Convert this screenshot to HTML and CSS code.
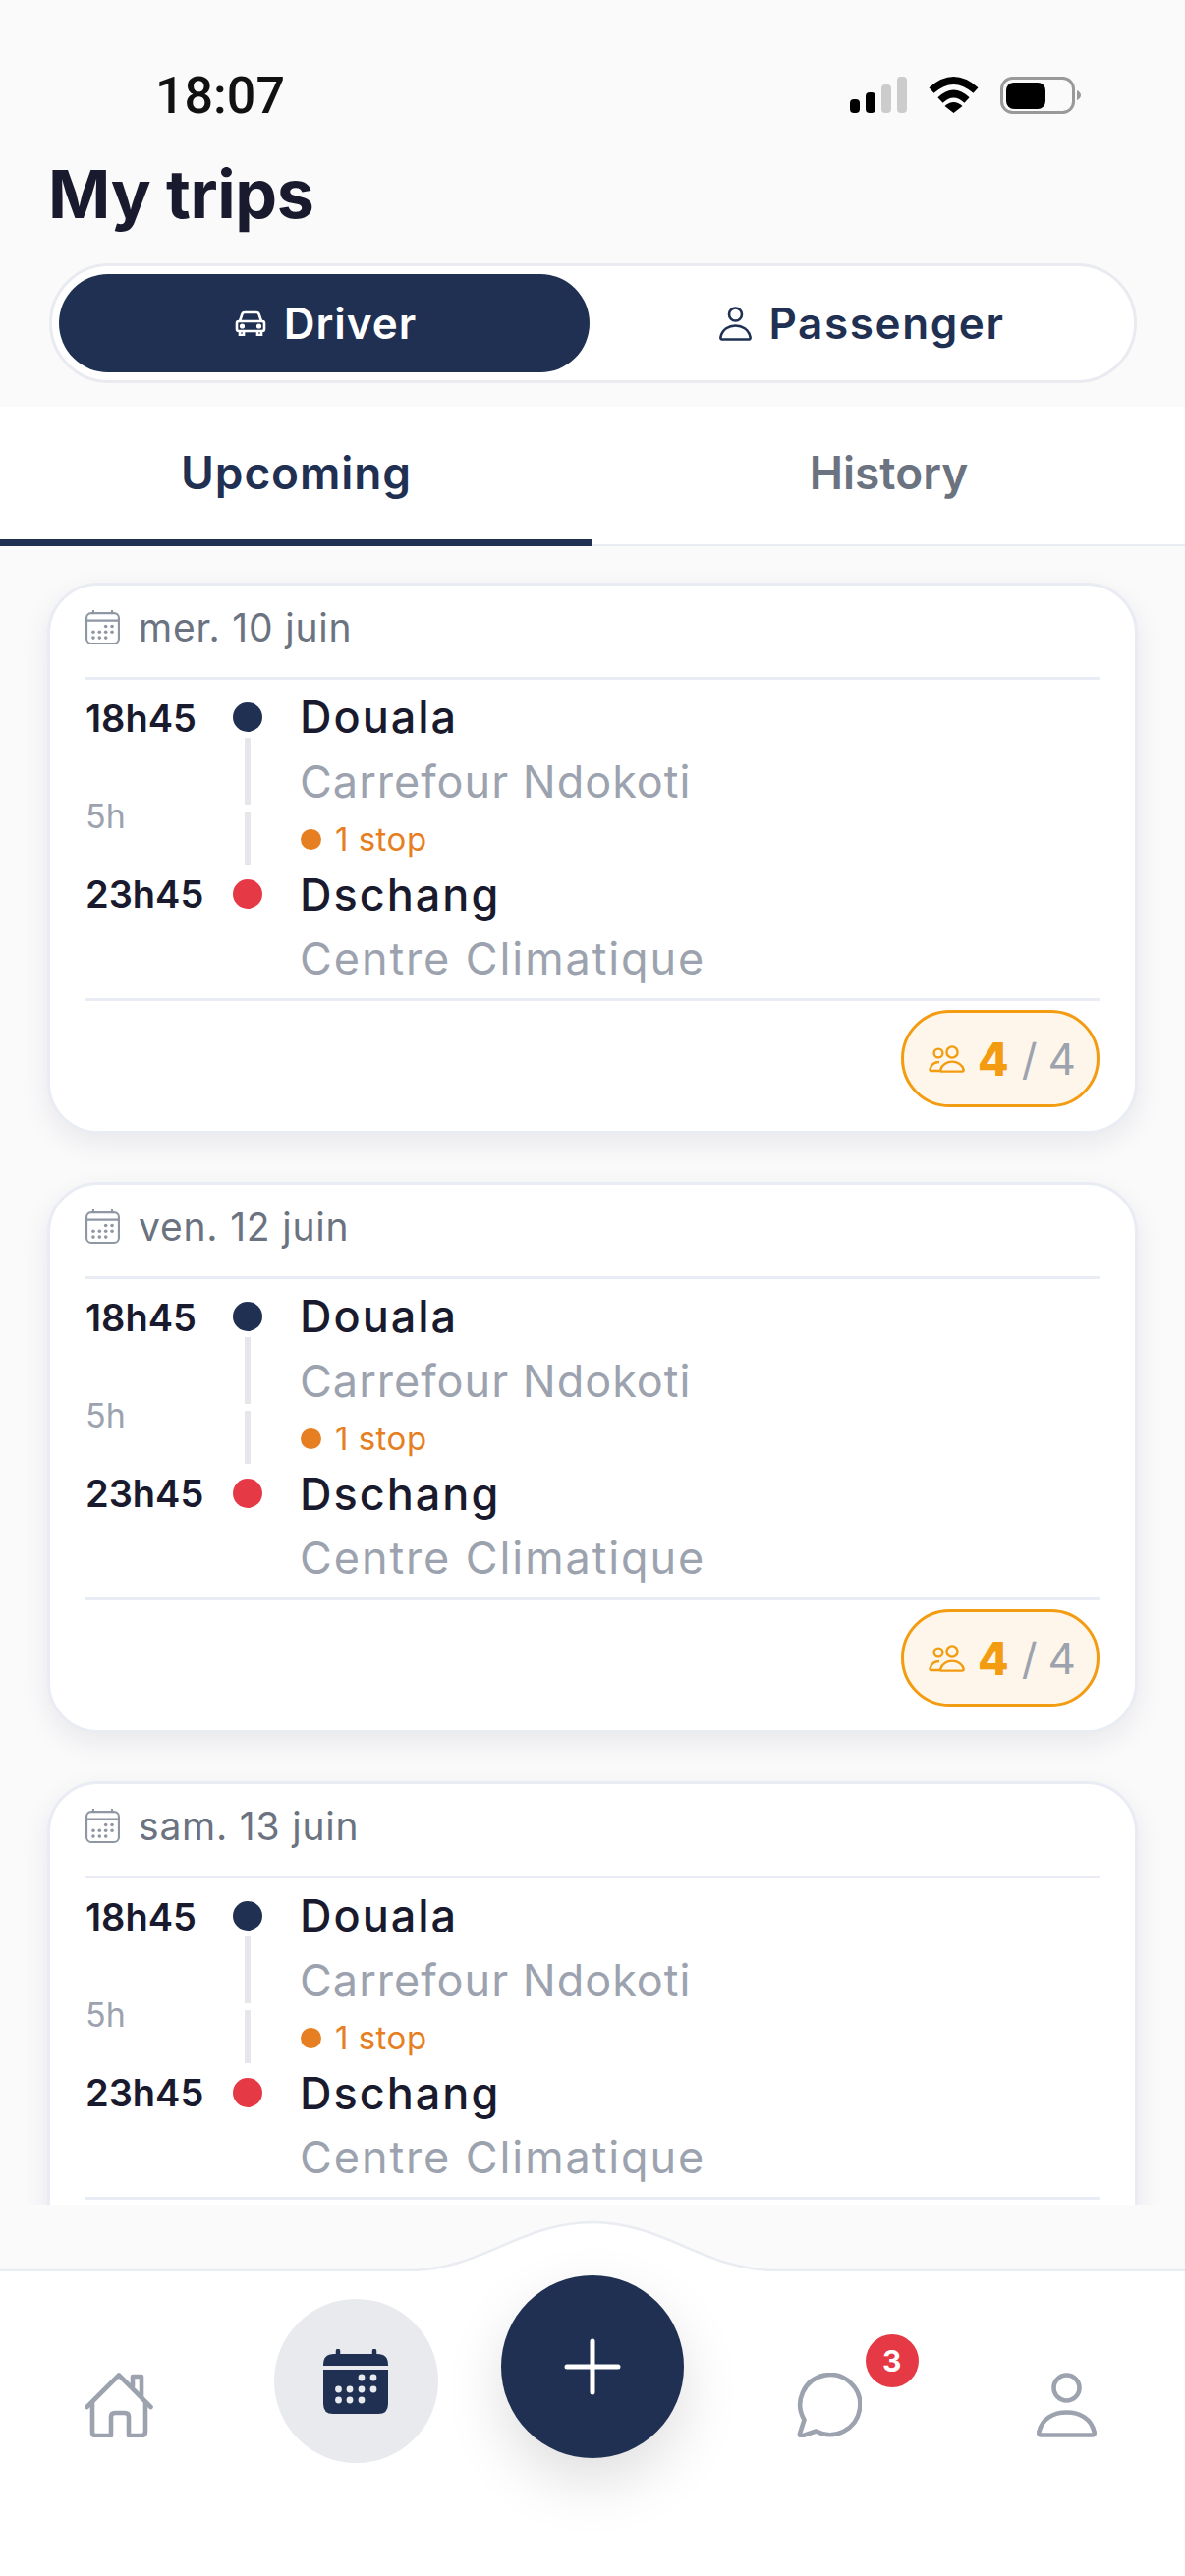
FILE: index.html
```html
<!DOCTYPE html>
<html>
   <head>
      <title>My trips</title>
      <link rel="stylesheet" href="styles.css">
   </head>
   <body>

   <svg class="defs" width="0" height="0">
      <symbol id="cal" viewBox="0 0 66 66">
         <path d="M15 6V1M51 6V1" fill="none" stroke="currentColor" stroke-width="4" stroke-linecap="round"/>
         <rect x="2" y="6" width="62" height="58" rx="9" fill="none" stroke="currentColor" stroke-width="4"/>
         <path d="M2 20H64" stroke="currentColor" stroke-width="4"/>
         <g fill="currentColor">
            <circle cx="39" cy="31" r="3.4"/><circle cx="51" cy="31" r="3.4"/>
            <circle cx="15" cy="42" r="3.4"/><circle cx="27" cy="42" r="3.4"/><circle cx="39" cy="42" r="3.4"/><circle cx="51" cy="42" r="3.4"/>
            <circle cx="15" cy="53" r="3.4"/><circle cx="27" cy="53" r="3.4"/><circle cx="39" cy="53" r="3.4"/>
         </g>
      </symbol>
      <symbol id="people" viewBox="0 0 37 28">
         <g fill="none" stroke="currentColor" stroke-width="2.4">
            <circle cx="10" cy="8" r="4.4"/>
            <circle cx="24" cy="7" r="5.6"/>
            <path d="M12 26H3Q1 26 1.6 24C3 19 7 17 11 17"/>
            <path d="M13 26.6H34Q36 26.6 35.6 24.6C34.4 19.6 29 16.6 24 16.6S13.6 19.6 12.4 24.6Q12 26.6 13 26.6Z"/>
         </g>
      </symbol>
   </svg>

   <div class="status">
      <span class="clock">18:07</span>
      <div class="status-icons">
         <svg width="58" height="37" viewBox="0 0 58 37">
            <rect x="0" y="23" width="10" height="14" rx="4"/>
            <rect x="16" y="16" width="10" height="21" rx="4"/>
            <rect x="32" y="8" width="10" height="29" rx="4" fill="#cccccc"/>
            <rect x="48" y="0" width="10" height="37" rx="4" fill="#cccccc"/>
         </svg>
         <svg width="51" height="37" viewBox="0 0 51 37">
            <path d="M3 14Q25.5 -6 48 14" fill="none" stroke="#000" stroke-width="7.5"/>
            <path d="M12 24Q25.5 11 39 24" fill="none" stroke="#000" stroke-width="7.5"/>
            <path d="M16.5 30Q25.5 22 34.500 30L25.5 37Z"/>
         </svg>
         <svg width="82" height="38" viewBox="0 0 82 38">
            <rect x="1.500" y="1.500" width="73" height="35" rx="11" fill="none" stroke="#999" stroke-width="3"/>
            <rect x="6" y="6" width="40" height="27" rx="8"/>
            <path d="M78 14Q82 16 82 19T78 24Z" fill="#999"/>
         </svg>
      </div>
   </div>

   <h1 class="title">My trips</h1>

   <div class="segment">
      <div class="seg-btn seg-on">
         <svg width="32" height="26" viewBox="0 0 32 26" fill="none" stroke="#fff" stroke-width="2.600">
            <path d="M5 11L7.500 3.500Q8 2 10 2H22Q24 2 24.500 3.500L27 11"/>
            <rect x="2" y="11" width="28" height="10" rx="2"/>
            <path d="M5 21V25H9V21M23 21V25H27V21"/>
            <circle cx="7.500" cy="16" r="1.300"/><circle cx="24.500" cy="16" r="1.300"/>
         </svg>
         Driver
      </div>
      <div class="seg-btn seg-pass">
         <svg width="33" height="35" viewBox="0 0 33 35" fill="none" stroke="#1f3052" stroke-width="2.600">
            <circle cx="16.500" cy="8" r="6.500"/>
            <path d="M3 33.500H30Q32 33.500 31.500 31C30 23 23 19.500 16.500 19.500S3 23 1.500 31Q1 33.500 3 33.500Z"/>
         </svg>
         Passenger
      </div>
   </div>

   <div class="tabs">
      <div class="tab tab-on">Upcoming</div>
      <div class="tab">History</div>
   </div>

   <div class="list">
      <div class="card">
         <div class="card-date"><svg class="cal-ic"><use href="#cal"/></svg>mer. 10 juin</div>
         <div class="trip">
            <div class="time">18h45</div>
            <div class="mark"><i class="dot dot-navy"></i></div>
            <div class="city">Douala</div>
            <div class="dur">5h</div>
            <div class="mark mark-top"><i class="line line-a"></i></div>
            <div class="place place-a">Carrefour Ndokoti</div>
            <div class="mark mark-top"><i class="line line-b"></i></div>
            <div class="stop"><i class="stop-dot"></i>1 stop</div>
            <div class="time arr">23h45</div>
            <div class="mark arr"><i class="dot dot-red"></i></div>
            <div class="city arr">Dschang</div>
            <div class="place place-b">Centre Climatique</div>
         </div>
         <div class="card-foot">
            <div class="seats"><svg class="people-ic"><use href="#people"/></svg><b>4</b><span class="slash">/</span><span>4</span></div>
         </div>
      </div>

      <div class="card">
         <div class="card-date"><svg class="cal-ic"><use href="#cal"/></svg>ven. 12 juin</div>
         <div class="trip">
            <div class="time">18h45</div>
            <div class="mark"><i class="dot dot-navy"></i></div>
            <div class="city">Douala</div>
            <div class="dur">5h</div>
            <div class="mark mark-top"><i class="line line-a"></i></div>
            <div class="place place-a">Carrefour Ndokoti</div>
            <div class="mark mark-top"><i class="line line-b"></i></div>
            <div class="stop"><i class="stop-dot"></i>1 stop</div>
            <div class="time arr">23h45</div>
            <div class="mark arr"><i class="dot dot-red"></i></div>
            <div class="city arr">Dschang</div>
            <div class="place place-b">Centre Climatique</div>
         </div>
         <div class="card-foot">
            <div class="seats"><svg class="people-ic"><use href="#people"/></svg><b>4</b><span class="slash">/</span><span>4</span></div>
         </div>
      </div>

      <div class="card">
         <div class="card-date"><svg class="cal-ic"><use href="#cal"/></svg>sam. 13 juin</div>
         <div class="trip">
            <div class="time">18h45</div>
            <div class="mark"><i class="dot dot-navy"></i></div>
            <div class="city">Douala</div>
            <div class="dur">5h</div>
            <div class="mark mark-top"><i class="line line-a"></i></div>
            <div class="place place-a">Carrefour Ndokoti</div>
            <div class="mark mark-top"><i class="line line-b"></i></div>
            <div class="stop"><i class="stop-dot"></i>1 stop</div>
            <div class="time arr">23h45</div>
            <div class="mark arr"><i class="dot dot-red"></i></div>
            <div class="city arr">Dschang</div>
            <div class="place place-b">Centre Climatique</div>
         </div>
      </div>
   </div>

   <div class="nav">
      <svg class="nav-curve" width="1206" height="68" viewBox="0 0 1206 68">
         <path d="M0 67H415C490 67 530 18 603 18S716 67 791 67H1206V68H0Z" fill="#fff"/>
         <path d="M0 67H415C490 67 530 18 603 18S716 67 791 67H1206" fill="none" stroke="#e9ecf1" stroke-width="2.500"/>
      </svg>
      <div class="nav-row">
         <div class="nav-item">
            <svg width="70" height="66" viewBox="0 0 70 66" fill="none" stroke="#9ca3af" stroke-width="4.600" stroke-linecap="round" stroke-linejoin="round">
               <path d="M2.500 35L35 2.500L67.500 35"/>
               <path d="M49 14V4H58V25"/>
               <path d="M8 30V60Q8 64 11 64H27V45Q27 41 31 41H41Q45 41 45 45V64H58Q62 64 62 60V30"/>
            </svg>
         </div>
         <div class="nav-item">
            <div class="nav-cal">
               <svg width="66" height="66" viewBox="0 0 66 66">
                  <path d="M15 7V2M52 7V2" stroke="#1f3052" stroke-width="4.500" stroke-linecap="round"/>
                  <path d="M0 16Q0 5 11 5H55Q66 5 66 16V17H0Z" fill="#1f3052"/>
                  <path d="M0 21H66V56Q66 66 56 66H10Q0 66 0 56Z" fill="#1f3052"/>
                  <g fill="#e9eaee">
                     <circle cx="39" cy="29" r="3.400"/><circle cx="51" cy="29" r="3.400"/>
                     <circle cx="15.500" cy="41" r="3.400"/><circle cx="27" cy="41" r="3.400"/><circle cx="39" cy="41" r="3.400"/><circle cx="51" cy="41" r="3.400"/>
                     <circle cx="15.500" cy="52" r="3.400"/><circle cx="27" cy="52" r="3.400"/><circle cx="39" cy="52" r="3.400"/>
                  </g>
               </svg>
            </div>
         </div>
         <div class="nav-item"></div>
         <div class="nav-item">
            <div class="chat">
               <svg width="67" height="66" viewBox="0 0 67 66" fill="none" stroke="#9ca3af" stroke-width="4.600" stroke-linejoin="round">
                  <path d="M8.500 48A30.500 30.500 0 1 1 20.500 59.500L6 64.500Q3.500 64.500 4 62Z"/>
               </svg>
               <span class="chat-badge">3</span>
            </div>
         </div>
         <div class="nav-item">
            <svg width="61" height="66" viewBox="0 0 61 66" fill="none" stroke="#9ca3af" stroke-width="4.600">
               <circle cx="30.500" cy="15.500" r="13"/>
               <path d="M5 63.500H56Q59.500 63.500 58.500 60C55.500 47 44 40.500 30.500 40.500S5.500 47 2.500 60Q1.500 63.500 5 63.500Z"/>
            </svg>
         </div>
      </div>
      <div class="fab">
         <svg width="58" height="58" viewBox="0 0 58 58" stroke="#fff" stroke-width="5" stroke-linecap="round">
            <path d="M29 3V55M3 29H55"/>
         </svg>
      </div>
   </div>
   </body>
</html>
```

FILE: styles.css
```css
* { box-sizing: border-box; }
html, body { margin: 0; padding: 0; }
body { width: 1206px; height: 2622px; overflow: hidden; background: #fafafb;
       font-family: "Inter", "Noto Sans", sans-serif; color: #1a1a2e;
       display: flex; flex-direction: column; }
.defs { position: absolute; }

/* status bar + title */
.status { height: 160px; flex: none; display: flex; justify-content: space-between;
          align-items: flex-start; padding: 70px 106px 0 158px; }
.clock { font-size: 52px; line-height: 56px; font-weight: 500; color: #111; font-family: "Roboto", sans-serif; }
.status-icons { display: flex; align-items: flex-start; gap: 22px; padding-top: 8px; }
.title { margin: 0; flex: none; height: 108px; padding-left: 49px; font-size: 68px;
         line-height: 74px; font-weight: 700; letter-spacing: -0.4px; }

/* driver / passenger switch */
.segment { flex: none; margin: 0 49px 24px 50px; height: 122px; background: #fff;
           border: 3px solid #e9ebf0; border-radius: 61px; padding: 8px 8px 8px 7px;
           display: grid; grid-template-columns: 540px 1fr; }
.seg-btn { height: 100px; border-radius: 50px; display: flex; align-items: center;
           justify-content: center; gap: 18px; font-size: 44px; font-weight: 600;
           letter-spacing: 1px; color: #1f3052; padding-left: 3px; }
.seg-pass { letter-spacing: 1.6px; padding-left: 8px; }
.seg-on { background: #1f3052; color: #fff; }

/* tabs */
.tabs { flex: none; height: 142px; background: #fff; display: grid;
        grid-template-columns: 603px 603px; border-bottom: 2px solid #e9ecf1; }
.tab { display: flex; justify-content: center; align-items: center; padding-bottom: 8px;
       font-size: 46px; font-weight: 600; color: #6b7280; height: 142px; }
.tab-on { color: #1f3052; border-bottom: 7px solid #1f3052; padding-bottom: 1px; letter-spacing: 0.9px; }

/* trip cards */
.list { flex: 1; min-height: 0; overflow: hidden; padding: 37px 48px 0; }
.card { background: #fff; border: 3px solid #e9ecf3; border-radius: 52px; height: 561px;
        padding: 0 36px; margin-bottom: 49px; box-shadow: 0 10px 28px rgba(20, 30, 60, 0.08); }
.card-date { height: 96px; display: flex; align-items: center; gap: 19px; padding-bottom: 8px;
             border-bottom: 3px solid #e9ecf5; font-size: 39px; letter-spacing: 0.8px; color: #6b7280; }
.cal-ic { width: 35px; height: 35px; color: #8f97a4; flex: none; }
.trip { display: grid; grid-template-columns: 150px 30px 1fr; column-gap: 0;
        grid-template-rows: 59px 75px 56px 54px 80px; border-bottom: 3px solid #e9ecf5; height: 327px; }
.time { font-size: 38px; font-weight: 600; display: flex; align-items: center; padding-top: 18px; }
.mark { display: flex; justify-content: center; align-items: center; padding-top: 16px; }
.mark-top { align-items: flex-start; padding-top: 0; }
.dot { width: 30px; height: 30px; border-radius: 50%; display: block; }
.dot-navy { background: #1f3052; }
.dot-red { background: #e63946; }
.line { display: block; width: 6px; background: #e5e7eb; }
.line-a { height: 68px; }
.line-b { height: 54px; }
.city { font-size: 45px; font-weight: 500; margin-left: 38px; letter-spacing: 2px; display: flex;
        align-items: center; padding-top: 16px; }
.arr { padding-top: 2px; }
.dur { grid-column: 1; grid-row: 2 / span 2; font-size: 34px; color: #9ca3af;
       display: flex; align-items: center; padding-top: 28px; }
.place { font-size: 45px; color: #9ca3af; margin-left: 38px; display: flex; align-items: center; }
.place-a { padding-top: 13px; letter-spacing: 1px; }
.place-b { grid-column: 3; grid-row: 5; padding-bottom: 2px; letter-spacing: 1.9px; }
.stop { grid-column: 3; margin-left: 39px; font-size: 33px; letter-spacing: 0.5px; color: #e67e22; display: flex;
        align-items: center; gap: 14px; }
.stop-dot { display: block; width: 21px; height: 21px; border-radius: 50%; background: #e67e22; }
.card-foot { display: flex; justify-content: flex-end; padding-top: 9px; }
.seats { width: 202px; height: 99px; border: 3px solid #f39c12; border-radius: 50px; background: #fef6ea;
         display: flex; align-items: center; padding-left: 25px; font-size: 44px; color: #9ca3af; }
.seats b { color: #f39c12; font-size: 46px; font-weight: 800; margin: 0 13px 0 13px; }
.slash { margin-right: 11px; }
.people-ic { width: 37px; height: 28px; color: #f39c12; flex: none; }

/* bottom nav */
.nav { flex: none; position: relative; height: 378px; }
.nav-curve { display: block; }
.nav-row { height: 310px; background: #fff; display: grid; grid-template-columns: repeat(5, 1fr); }
.nav-item { display: flex; justify-content: center; align-items: flex-start; padding-top: 103px; }
.nav-cal { width: 167px; height: 167px; margin-top: -75px; margin-left: 1px; border-radius: 50%; background: #e9eaee;
           display: flex; align-items: center; justify-content: center; }
.chat { position: relative; width: 67px; height: 66px; margin-left: -2px; }
.chat-badge { position: absolute; left: 71px; top: -39px; width: 54px; height: 54px; border-radius: 50%;
              background: #e63946; color: #fff; font-size: 30px; font-weight: 700;
              display: flex; align-items: center; justify-content: center; }
.fab { position: absolute; left: 510px; top: 72px; width: 186px; height: 186px; border-radius: 50%;
       background: #1f3052; display: flex; align-items: center; justify-content: center;
       box-shadow: 0 24px 60px rgba(0, 0, 0, 0.13); }
```
